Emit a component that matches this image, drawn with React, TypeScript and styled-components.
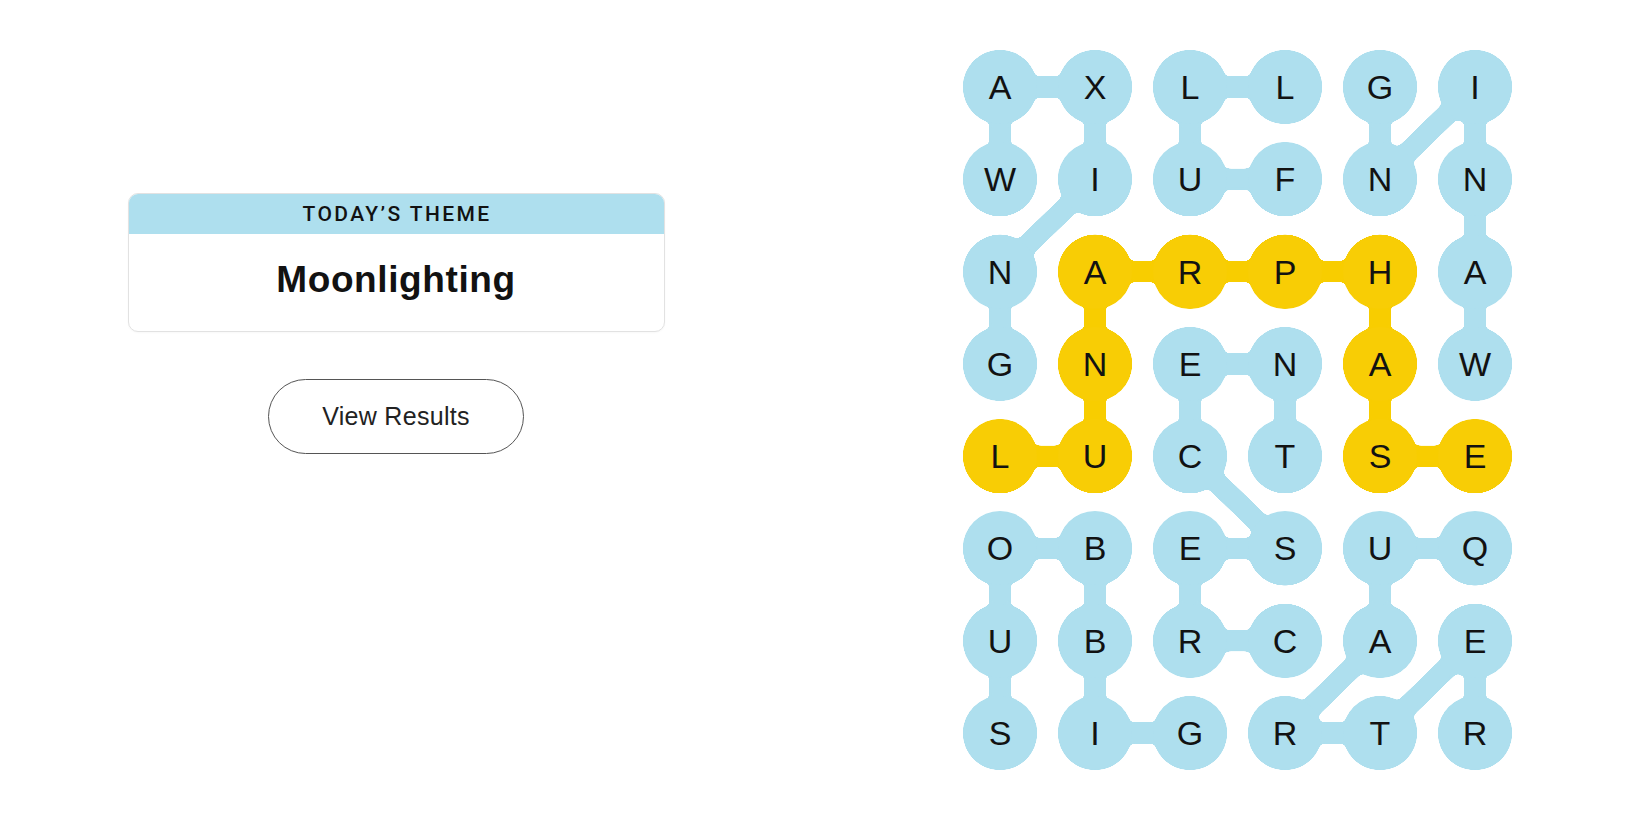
import React from "react";
import styled, { createGlobalStyle } from "styled-components";

const GlobalStyle = createGlobalStyle`
  html, body {
    margin: 0;
    padding: 0;
    background: #ffffff;
    font-family: "Liberation Sans", Arial, sans-serif;
    color: #121212;
  }
`;

const BLUE = "#aedfee";
const YELLOW = "#f8cd05";

const CELL = 74;
const COL_GAP = 21;
const ROW_GAP = 18.3;

const letters = [
  "AXLLGI",
  "WIUFNN",
  "NARPHA",
  "GNENAW",
  "LUCTSE",
  "OBESUQ",
  "UBRCAE",
  "SIGRTR",
];

type Pos = [number, number];

const blueWords: Pos[][] = [
  [[1, 0], [0, 0], [0, 1], [1, 1], [2, 0], [3, 0]],
  [[1, 3], [1, 2], [0, 2], [0, 3]],
  [[3, 5], [2, 5], [1, 5], [0, 5], [1, 4], [0, 4]],
  [[6, 3], [6, 2], [5, 2], [5, 3], [4, 2], [3, 2], [3, 3], [4, 3]],
  [[7, 2], [7, 1], [6, 1], [5, 1], [5, 0], [6, 0], [7, 0]],
  [[5, 5], [5, 4], [6, 4], [7, 3], [7, 4], [6, 5], [7, 5]],
];

const spangram: Pos[] = [
  [4, 0], [4, 1], [3, 1], [2, 1], [2, 2], [2, 3], [2, 4], [3, 4], [4, 4], [4, 5],
];

const spanSet = new Set(spangram.map(([r, c]) => `${r}-${c}`));

const cx = (c: number) => CELL / 2 + c * (CELL + COL_GAP);
const cy = (r: number) => CELL / 2 + r * (CELL + ROW_GAP);

const Page = styled.main`
  display: flex;
  width: 1650px;
  height: 825px;
  overflow: hidden;
`;

const LeftPane = styled.section`
  width: 825px;
  box-sizing: border-box;
  padding: 193px 33px 0 0;
  display: flex;
  flex-direction: column;
  align-items: center;
`;

const RightPane = styled.section`
  width: 825px;
  box-sizing: border-box;
  padding-top: 50px;
  display: flex;
  justify-content: center;
  align-items: flex-start;
`;

const ThemeCard = styled.div`
  width: 537px;
  box-sizing: border-box;
  border: 1px solid #e2e2e2;
  border-radius: 10px;
  overflow: hidden;
  background: #fff;
  box-shadow: 0 1px 2px rgba(0, 0, 0, 0.03);
`;

const ThemeHeader = styled.div`
  height: 40px;
  background: ${BLUE};
  display: flex;
  align-items: center;
  justify-content: center;
  font-family: Roboto, "Liberation Sans", sans-serif;
  font-weight: 500;
  font-size: 21px;
  letter-spacing: 2.4px;
  color: #121212;
  padding-left: 2px;
  box-sizing: border-box;
`;

const ThemeBody = styled.div`
  height: 97px;
  display: flex;
  align-items: center;
  justify-content: center;
  font-family: "Liberation Sans", Arial, sans-serif;
  font-weight: 700;
  font-size: 37px;
  letter-spacing: 0.6px;
  color: #121212;
  padding-bottom: 5px;
  box-sizing: border-box;
`;

const ResultsButton = styled.button`
  margin-top: 47px;
  width: 256px;
  height: 75px;
  border: 1px solid #555;
  border-radius: 38px;
  background: #fff;
  font-family: "Liberation Sans", Arial, sans-serif;
  font-size: 25px;
  letter-spacing: 0.3px;
  color: #222;
  cursor: pointer;
`;

const Board = styled.div`
  position: relative;
  width: ${CELL * 6 + COL_GAP * 5}px;
  height: ${CELL * 8 + ROW_GAP * 7}px;
`;

const Links = styled.svg`
  position: absolute;
  inset: 0;
  width: 100%;
  height: 100%;
  overflow: visible;
`;

const LetterGrid = styled.div`
  position: relative;
  display: grid;
  grid-template-columns: repeat(6, ${CELL}px);
  grid-template-rows: repeat(8, ${CELL}px);
  column-gap: ${COL_GAP}px;
  row-gap: ${ROW_GAP}px;
`;

const Letter = styled.div<{ $span: boolean }>`
  width: ${CELL}px;
  height: ${CELL}px;
  border-radius: 50%;
  background: ${(p) => (p.$span ? YELLOW : BLUE)};
  display: flex;
  align-items: center;
  justify-content: center;
  font-family: "Liberation Sans", Arial, sans-serif;
  font-size: 34px;
  color: #121212;
  padding-top: 1px;
  box-sizing: border-box;
`;

function Word({ cells, color }: { cells: Pos[]; color: string }) {
  const pts = cells.map(([r, c]) => `${cx(c)},${cy(r)}`).join(" ");
  return (
    <g filter="url(#goo)">
      <polyline
        points={pts}
        fill="none"
        stroke={color}
        strokeWidth={21}
        strokeLinejoin="round"
        strokeLinecap="round"
      />
      {cells.map(([r, c]) => (
        <circle key={`${r}-${c}`} cx={cx(c)} cy={cy(r)} r={CELL / 2} fill={color} />
      ))}
    </g>
  );
}

export default function App() {
  return (
    <>
      <GlobalStyle />
      <Page>
        <LeftPane>
          <ThemeCard>
            <ThemeHeader>TODAY’S THEME</ThemeHeader>
            <ThemeBody>Moonlighting</ThemeBody>
          </ThemeCard>
          <ResultsButton>View Results</ResultsButton>
        </LeftPane>
        <RightPane>
          <Board>
            <Links>
              <defs>
                <filter id="goo" x="-10%" y="-10%" width="120%" height="120%">
                  <feGaussianBlur in="SourceGraphic" stdDeviation="2.6" result="blur" />
                  <feColorMatrix
                    in="blur"
                    type="matrix"
                    values="1 0 0 0 0  0 1 0 0 0  0 0 1 0 0  0 0 0 24 -11"
                  />
                </filter>
              </defs>
              {blueWords.map((w, i) => (
                <Word key={i} cells={w} color={BLUE} />
              ))}
              <Word cells={spangram} color={YELLOW} />
            </Links>
            <LetterGrid>
              {letters.map((row, r) =>
                row.split("").map((ch, c) => (
                  <Letter key={`${r}-${c}`} $span={spanSet.has(`${r}-${c}`)}>
                    {ch}
                  </Letter>
                ))
              )}
            </LetterGrid>
          </Board>
        </RightPane>
      </Page>
    </>
  );
}
